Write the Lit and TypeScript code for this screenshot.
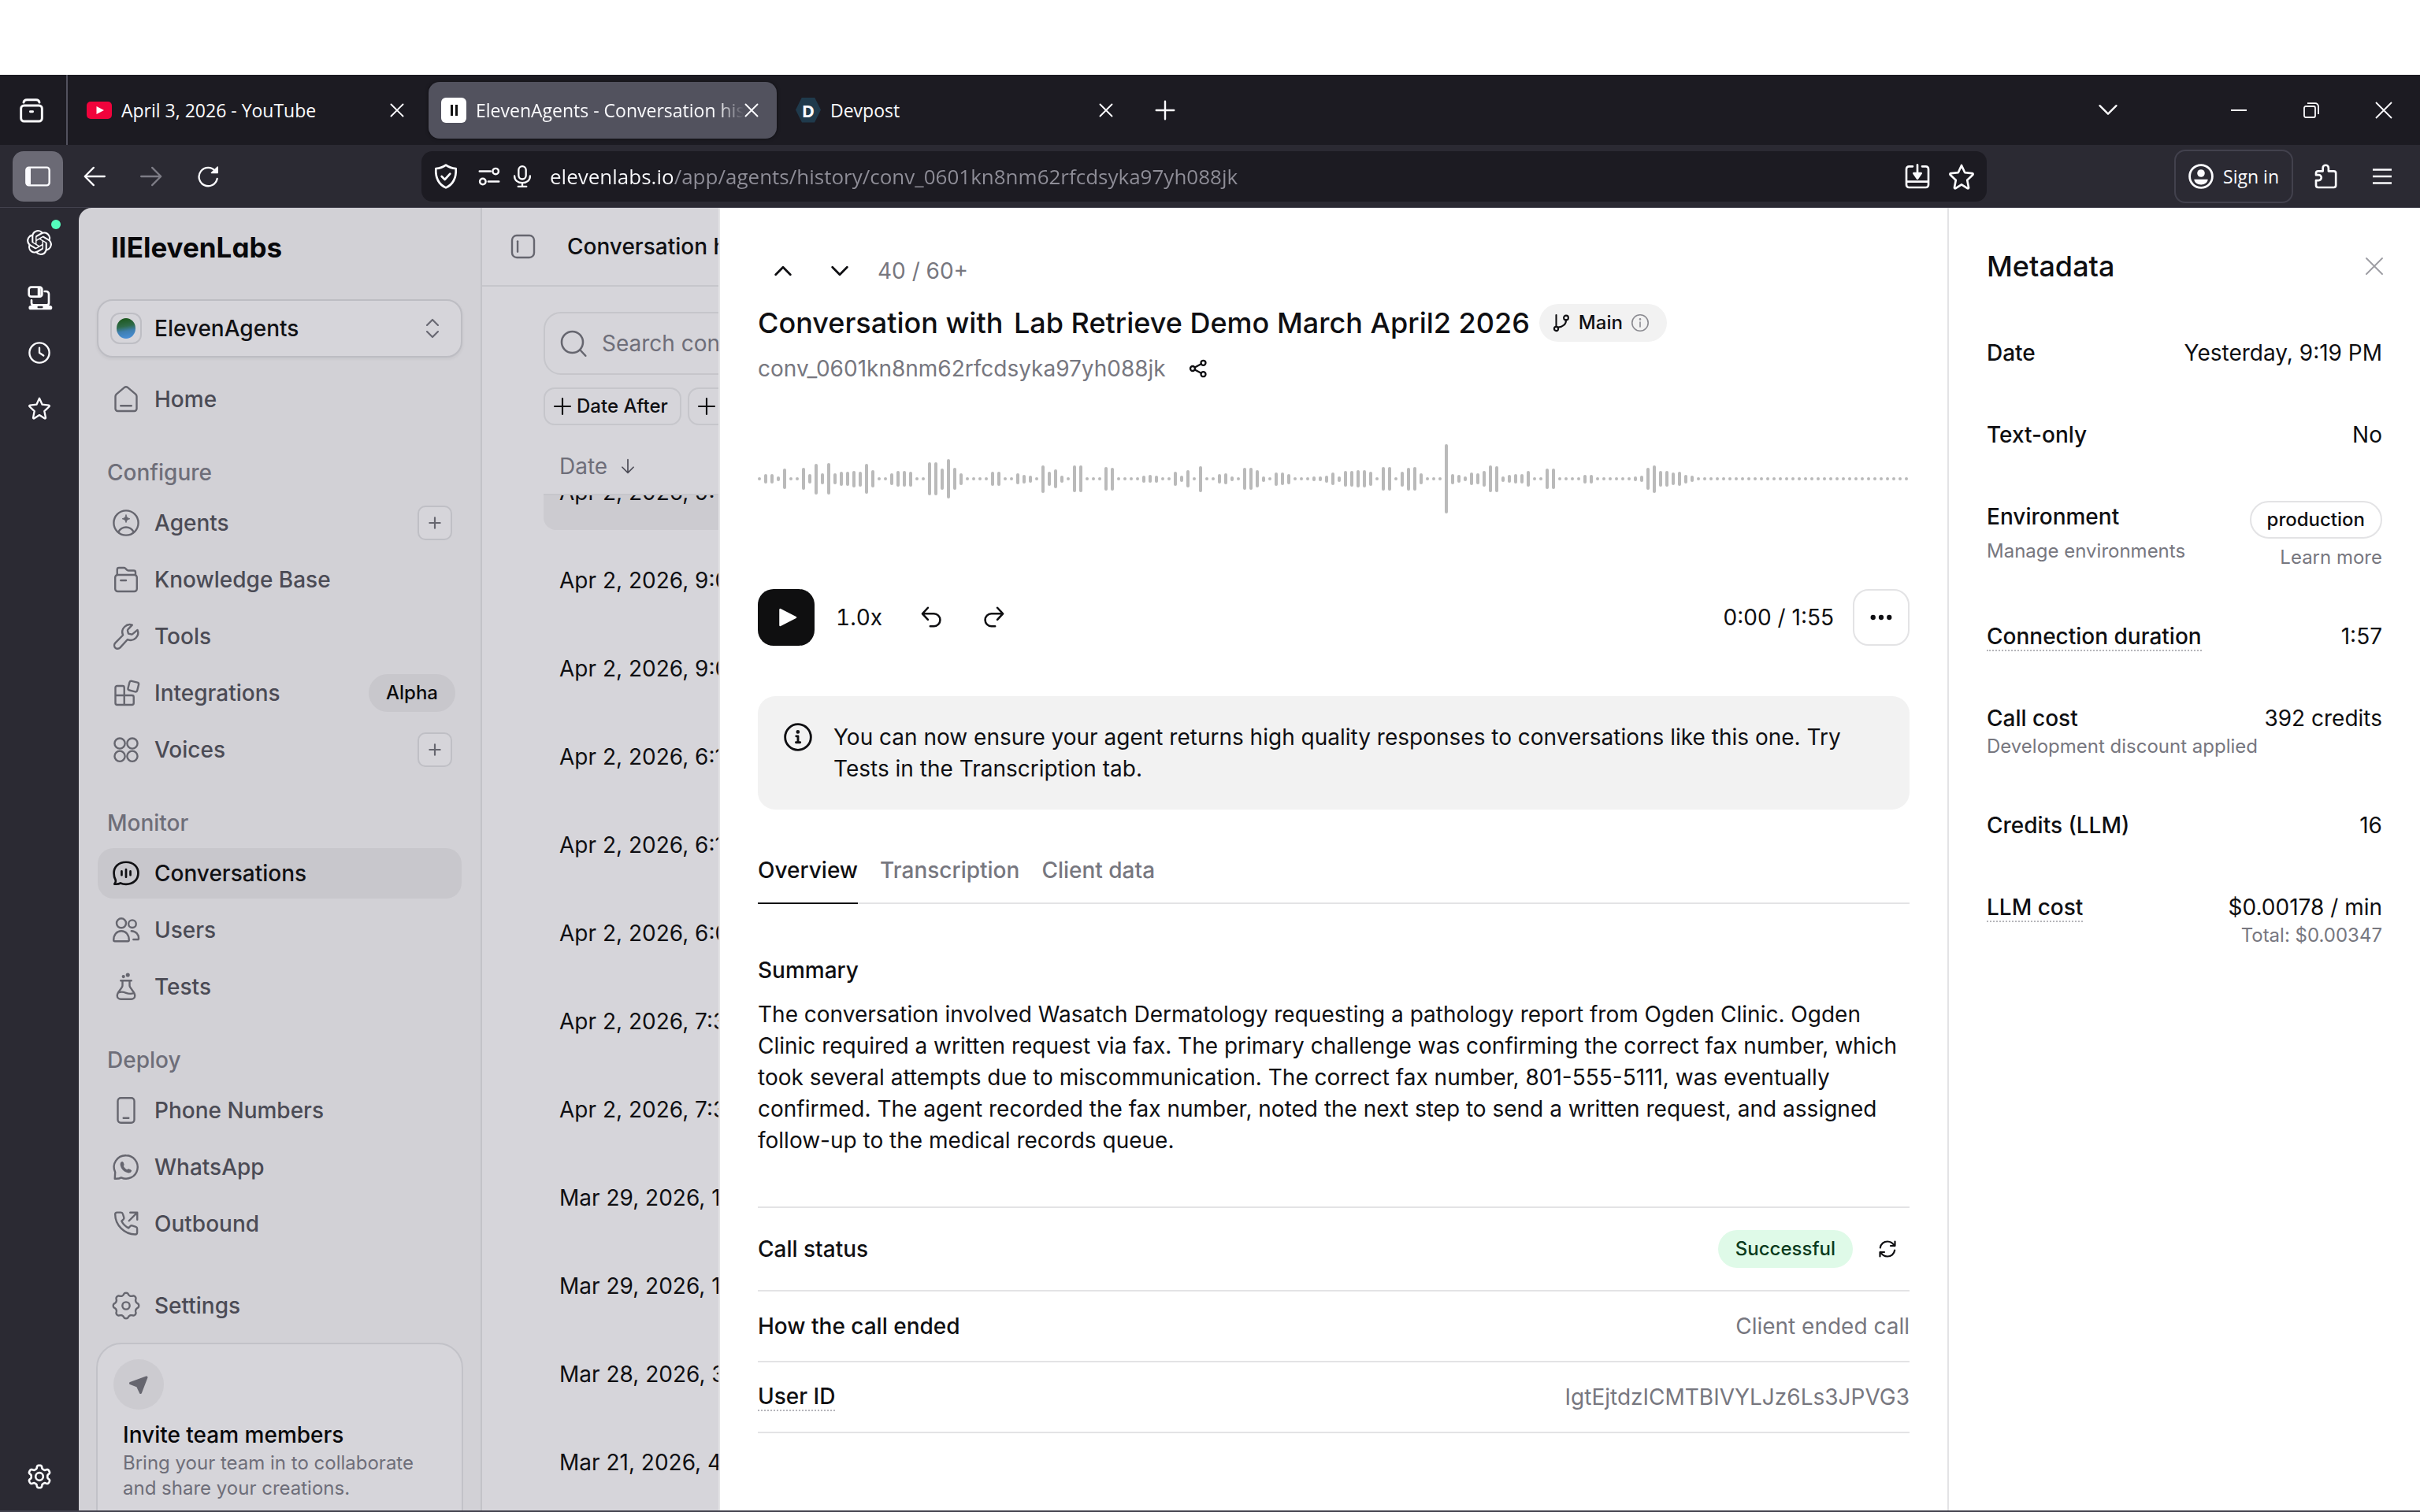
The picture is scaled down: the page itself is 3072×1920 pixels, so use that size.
import { LitElement, html, svg, css, nothing, type TemplateResult } from "lit";
import { customElement } from "lit/decorators.js";
import { classMap } from "lit/directives/class-map.js";
import { styleMap } from "lit/directives/style-map.js";

/* Closed outline of a cog: a circle whose radius swells once per tooth. */
const cog = (teeth: number, base: number, depth: number, sharp: number) => {
  const points: string[] = [];
  for (let i = 0; i < 144; i++) {
    const a = (i / 144) * Math.PI * 2;
    const r = base + depth * Math.tanh(sharp * Math.cos(teeth * a));
    points.push(`${(12 + r * Math.sin(a)).toFixed(2)} ${(12 - r * Math.cos(a)).toFixed(2)}`);
  }
  return `M${points.join("L")}Z`;
};

const stroke = (body: TemplateResult, width = 1.6) => html`<svg
  viewBox="0 0 24 24" fill="none" stroke="currentColor" stroke-width=${width}
  stroke-linecap="round" stroke-linejoin="round" aria-hidden="true">${body}</svg>`;

const icons: Record<string, TemplateResult> = {
  home: stroke(svg`<path d="M3 9.6c0-.7.3-1.3.8-1.8l6.7-5.7a2.300 2.300 0 0 1 3 0l6.700 5.700c.5.5.8 1.100.8 1.800v10.400a2 2 0 0 1-2 2H5a2 2 0 0 1-2-2z"/><path d="M7.500 17.500h9"/>`),
  agents: stroke(svg`<circle cx="12" cy="12" r="10.400"/><path d="M5.500 19.700c1.500-2.600 3.800-4 6.500-4s5 1.400 6.500 4"/><path d="M12 5.300c.5 2 1.200 2.700 3.200 3.200-2 .5-2.700 1.200-3.200 3.200-.5-2-1.200-2.700-3.200-3.200 2-.5 2.700-1.200 3.200-3.200z" fill="currentColor" stroke-width=".6"/>`),
  folder: stroke(svg`<rect x="2.800" y="8" width="18.400" height="14" rx="2.200"/><path d="M4.500 8V3.500A1.500 1.500 0 0 1 6 2h4.200c.5 0 1 .2 1.300.6l1.200 1.200c.3.300.7.500 1.100.500h4.700a1.500 1.500 0 0 1 1.500 1.500V8"/><path d="M7.500 12.700h4.500"/>`),
  wrench: stroke(svg`<path d="M21.700 6.600c.9 2.300.4 5-1.400 6.800-1.900 1.900-4.700 2.300-7 1.300l-6.300 6.900c-1.200 1.200-3 1.200-4.100.1s-1.100-2.900 0-4.100l6.500-6.600c-1-2.300-.6-5.100 1.300-7 1.800-1.800 4.300-2.300 6.500-1.600l-3.500 3.700c-.4.400-.5 1-.3 1.500l.6 2.100 2.200.6c.5.2 1.100 0 1.500-.4z"/>`),
  blocks: stroke(svg`<path d="M4.500 6h4.500a1.500 1.500 0 0 1 1.500 1.500V14h6.500a1.500 1.500 0 0 1 1.500 1.500v5a1.500 1.500 0 0 1-1.500 1.500H4.500A1.500 1.500 0 0 1 3 20.500v-13A1.500 1.500 0 0 1 4.500 6zM3 14h7.500v8"/><rect x="14.200" y="2.400" width="8" height="8" rx="1.500" transform="rotate(14 18.200 6.400)"/>`),
  circles: stroke(svg`<circle cx="6.700" cy="6.700" r="4.400"/><circle cx="17.300" cy="6.700" r="4.400"/><circle cx="6.700" cy="17.500" r="4.400"/><circle cx="17.300" cy="17.500" r="4.400"/>`),
  bubble: stroke(svg`<path d="M12 2.500c6.300 0 10.300 3.900 10.300 9.300s-4 9.400-10.300 9.400c-1.900 0-3.400-.3-4.700-.9-.9.600-3 1-5.100.8 1-1.200 1.300-2.200 1-3.300-1-1.700-1.500-3.700-1.500-6C1.700 6.400 5.700 2.500 12 2.500z"/><path d="M8.300 10.300v3.200M12 8.700v6.400M15.700 10.300v3.200"/>`, 1.8),
  users: stroke(svg`<circle cx="8" cy="6.200" r="4"/><path d="M1.500 20.500c0-4.500 2.500-7.700 6.500-7.700s6.500 3.200 6.500 7.700c0 .6-.4 1-1 1h-11c-.6 0-1-.4-1-1z"/><circle cx="17.300" cy="6.800" r="3.200"/><path d="M16.500 12.800c4 .2 6.200 3 6.200 6.300 0 .6-.4.900-1 .900h-3.500"/>`),
  flask: stroke(svg`<path d="M7.500 6.800h9M9 6.800v4c0 .8-.2 1.200-.6 1.800l-3.200 4.600c-.5.800-.7 1.500-.7 2.300 0 1.800 1.300 3 3 3h9c1.700 0 3-1.200 3-3 0-.8-.2-1.500-.7-2.300l-3.200-4.600c-.4-.6-.6-1-.6-1.800v-4M5.500 17c2.200-.9 4-.8 6.500.2s4.200 1 6.600.2"/><circle cx="9.800" cy="3.400" r=".6" fill="currentColor"/><circle cx="13.500" cy="2" r=".9" fill="currentColor"/>`),
  phone: stroke(svg`<rect x="5" y="1.500" width="14" height="21" rx="2.600"/><path d="M9.800 18.500h4.400"/>`),
  whatsapp: stroke(svg`<path d="M12 2.200a9.800 9.800 0 1 1-4.100 18.700c-1.200.7-3.300 1-5.400.9l.3-5.500A9.800 9.800 0 0 1 12 2.200z"/><path d="M8.800 7.800c.6.300 1 1.300 1.200 2.300l-.6.9c.5 1.600 1.900 3 3.600 3.700l1-.8c1 .2 1.800.6 2.300 1.200-.3 1.200-1.400 1.600-2.700 1.300-3-.6-5.500-3-6-5.900-.2-1.300.1-2.400 1.200-2.700z" fill="currentColor" stroke-width=".9"/>`),
  outbound: stroke(svg`<path d="M2.800 4c0-.9.700-1.600 1.600-1.600h3.300c.7 0 1.300.4 1.500 1.100l1 3.100c.2.600 0 1.200-.4 1.600L8.200 9.700c1.200 2.500 3.300 4.600 5.900 5.900l1.500-1.600c.4-.4 1-.600 1.600-.4l3.100 1c.7.200 1.100.800 1.100 1.500v3.300c0 .9-.7 1.600-1.600 1.600C10.700 21 2.800 13.100 2.800 4z"/><path d="M14.500 9.500l6.700-6.700M15.500 2.500h6v6"/>`),
  settings: stroke(svg`<path d=${cog(8, 9.9, 1.1, 1.2)}/><circle cx="12" cy="12" r="3.100"/>`),
  send: html`<svg viewBox="0 0 24 24" fill="currentColor" stroke="currentColor" stroke-width="3" stroke-linejoin="round" aria-hidden="true"><path d="M22 3 14.500 22.500 10.500 14 1.500 10.500z"/></svg>`,
  plus: stroke(svg`<path d="M12 4.500v15M4.500 12h15"/>`),
  plusBold: stroke(svg`<path d="M12 4v16M4 12h16"/>`, 2.6),
  updown: stroke(svg`<path d="M6 8.500l6-6 6 6M6 15.500l6 6 6-6"/>`, 1.9),
  up: stroke(svg`<path d="M5 15.500l7-7 7 7"/>`, 2.1),
  down: stroke(svg`<path d="M5 8.500l7 7 7-7"/>`, 2.1),
  chevron: stroke(svg`<path d="M3 7l9 9 9-9"/>`, 2),
  arrowDown: stroke(svg`<path d="M12 2v19.500M3.500 13.500l8.500 8.500 8.500-8.500"/>`, 2),
  panel: stroke(svg`<rect x="1.500" y="1.500" width="21" height="21" rx="4.500"/><path d="M6.800 7v10"/>`, 1.8),
  search: stroke(svg`<circle cx="11" cy="11" r="9"/><path d="M17.500 17.500l4.700 5"/>`, 1.7),
  branch: stroke(svg`<circle cx="5.500" cy="19.500" r="2.600"/><circle cx="18" cy="5.500" r="2.900"/><path d="M5.500 16.800V2M18 8.400c0 5-4 9-10 9.200"/>`, 2.1),
  info: stroke(svg`<circle cx="12" cy="12" r="10.200"/><path d="M12 11v6"/><circle cx="12" cy="7.400" r=".5" fill="currentColor"/>`),
  infoBold: stroke(svg`<circle cx="12" cy="12" r="10.900"/><path d="M10.500 11.200h1.500v5.300M10.300 16.500h3.500"/><circle cx="11.900" cy="7.600" r=".6" fill="currentColor"/>`, 1.9),
  share: stroke(svg`<circle cx="5" cy="12" r="3"/><circle cx="18.500" cy="4.800" r="3"/><circle cx="18.500" cy="19.200" r="3"/><path d="M7.700 10.600l8-4.300M7.700 13.400l8 4.300"/>`, 2.3),
  play: html`<svg viewBox="0 0 24 24" fill="currentColor" stroke="currentColor" stroke-width="2.500" stroke-linejoin="round" aria-hidden="true"><path d="M4.500 2v20L24 12z"/></svg>`,
  undo: stroke(svg`<path d="M8.500 1.500L2.500 8l6 6.500M3 8h12a6.800 6.800 0 0 1 0 13.600h-4"/>`, 2.2),
  redo: stroke(svg`<path d="M15.500 1.500l6 6.500-6 6.500M21 8H9a6.800 6.800 0 0 0 0 13.600h4"/>`, 2.2),
  dots: html`<svg viewBox="0 0 24 24" fill="currentColor" aria-hidden="true"><circle cx="3.200" cy="12" r="2.700"/><circle cx="12" cy="12" r="2.700"/><circle cx="20.800" cy="12" r="2.700"/></svg>`,
  refresh: stroke(svg`<path d="M2.800 10.500C3.500 5.700 7.300 2.500 12 2.500c3.800 0 7 2.200 8.700 5.500M21.500 2.500V8H16M21.200 13.500c-.7 4.800-4.500 8-9.200 8-3.800 0-7-2.200-8.700-5.500M2.500 21.500V16H8"/>`, 2.2),
  close: stroke(svg`<path d="M0 0l24 24M24 0L0 24"/>`, 2.3),
  closeBold: stroke(svg`<path d="M3 3l18 18M21 3L3 21"/>`, 2.3),
  tabs: stroke(svg`<path d="M4.500 4.500C4.800 2.800 5.800 2 7.500 2h9c1.700 0 2.700.8 3 2.500"/><rect x="2" y="7.500" width="20" height="15" rx="2.800"/><path d="M10.800 13.300h2.400"/>`, 2.2),
  youtube: html`<svg viewBox="0 0 32 22" aria-hidden="true"><rect width="32" height="22" rx="5" fill="#f0033c"/><path d="M12.500 6l9.500 5-9.500 5z" fill="#fff"/></svg>`,
  eleven: html`<svg viewBox="0 0 32 32" aria-hidden="true"><rect width="32" height="32" rx="6" fill="#fff"/><path d="M12 9h3v14h-3zM18 9h3v14h-3z" fill="#111"/></svg>`,
  sidebar: html`<svg viewBox="0 0 24 24" fill="none" stroke="currentColor" stroke-width="1.800" aria-hidden="true"><rect x="1" y="3.500" width="22" height="17" rx="2.500"/><path d="M3 4v16" stroke-width="4.500"/></svg>`,
  back: stroke(svg`<path d="M23 12H2M11 2.500L1.500 12l9.500 9.500"/>`, 2),
  forward: stroke(svg`<path d="M1 12h21M13 2.500l9.500 9.500-9.500 9.500"/>`, 2),
  reload: stroke(svg`<path d="M22 14.500A10 10 0 1 1 20 6.200"/><path d="M22.500 1.800v6.400h-6.700z" fill="currentColor" stroke-width="1.300"/>`, 2),
  shield: stroke(svg`<path d="M12 1.200c2.700 2 5.700 3 9.500 3.300C22 12.500 19 19.500 12 22.800 5 19.500 2 12.500 2.500 4.500 6.300 4.200 9.300 3.200 12 1.200z"/><path d="M8 12l3 3 5-5.500"/>`, 2),
  sliders: stroke(svg`<path d="M1.500 6.500h12M11 17.500h11.500"/><circle cx="19" cy="6.500" r="3.200"/><circle cx="5" cy="17.500" r="3.200"/>`, 2.1),
  mic: stroke(svg`<rect x="8" y="1" width="8" height="14" rx="4"/><path d="M3.500 11.500c0 4.500 3.500 7.500 8.500 7.500s8.500-3 8.500-7.500M12 19v4M7.500 23h9"/>`, 2),
  install: stroke(svg`<path d="M7.500 2.500H4A2.500 2.500 0 0 0 1.500 5v15A2.500 2.500 0 0 0 4 22.500h16a2.500 2.500 0 0 0 2.500-2.500V5A2.500 2.500 0 0 0 20 2.500h-3.500M1.500 17h21M12 1v8"/><path d="M8.500 9h7L12 14z" fill="currentColor"/>`, 2),
  star: stroke(svg`<path d="M12 1.500l3.100 6.800 7.200.8c.7.100.9.900.4 1.400l-5.300 5 1.400 7.100c.1.700-.6 1.200-1.200.8L12 19.800l-5.600 3.600c-.6.400-1.300-.1-1.200-.8l1.400-7.100-5.300-5c-.5-.5-.3-1.300.4-1.400l7.200-.8z"/>`, 2),
  account: html`<svg viewBox="0 0 24 24" fill="none" stroke="currentColor" stroke-width="2.100" aria-hidden="true"><circle cx="12" cy="12" r="10.800"/><circle cx="12" cy="9" r="3.600" fill="currentColor" stroke="none"/><path d="M5.500 14.800h13c0 2.800-2.800 5-6.500 5s-6.500-2.200-6.500-5z" fill="currentColor" stroke="none"/></svg>`,
  puzzle: stroke(svg`<path d="M9.500 7V4a2.700 2.700 0 0 1 5.400 0v3h5a2 2 0 0 1 2 2v11.500a2 2 0 0 1-2 2H5a2 2 0 0 1-2-2v-4.700h2.500a2.600 2.600 0 0 0 0-5.200H3V9a2 2 0 0 1 2-2z"/>`, 2),
  menu: html`<svg viewBox="0 0 24 24" fill="none" stroke="currentColor" stroke-width="2.400" aria-hidden="true"><path d="M0 3.500h24M0 12h24M0 20.500h24"/></svg>`,
  minimise: html`<svg viewBox="0 0 20 20" fill="none" stroke="currentColor" stroke-width="2" aria-hidden="true"><path d="M0 10h20"/></svg>`,
  restore: html`<svg viewBox="0 0 20 20" fill="none" stroke="currentColor" stroke-width="1.800" aria-hidden="true"><rect x="1" y="5" width="14" height="14" rx="2"/><path d="M5 1.200h10a4 4 0 0 1 4 4V15"/></svg>`,
  windowClose: html`<svg viewBox="0 0 20 20" fill="none" stroke="currentColor" stroke-width="1.800" aria-hidden="true"><path d="M0 0l20 20M20 0L0 20"/></svg>`,
  openai: html`<svg viewBox="0 0 24 24" fill="currentColor" aria-hidden="true"><path d="M22.2819 9.8211a5.9847 5.9847 0 0 0-.5157-4.9108 6.0462 6.0462 0 0 0-6.5098-2.9A6.0651 6.0651 0 0 0 4.9807 4.1818a5.9847 5.9847 0 0 0-3.9977 2.9 6.0462 6.0462 0 0 0 .7427 7.0966 5.98 5.98 0 0 0 .511 4.9107 6.051 6.051 0 0 0 6.5146 2.9001A5.9847 5.9847 0 0 0 13.2599 24a6.0557 6.0557 0 0 0 5.7718-4.2058 5.9894 5.9894 0 0 0 3.9977-2.9001 6.0557 6.0557 0 0 0-.7475-7.0729zm-9.022 12.6081a4.4755 4.4755 0 0 1-2.8764-1.0408l.1419-.0804 4.7783-2.7582a.7948.7948 0 0 0 .3927-.6813v-6.7369l2.02 1.1686a.071.071 0 0 1 .038.052v5.5826a4.504 4.504 0 0 1-4.4945 4.4944zm-9.6607-4.1254a4.4708 4.4708 0 0 1-.5346-3.0137l.142.0852 4.783 2.7582a.7712.7712 0 0 0 .7806 0l5.8428-3.3685v2.3324a.0804.0804 0 0 1-.0332.0615L9.74 19.9502a4.4992 4.4992 0 0 1-6.1408-1.6464zM2.3408 7.8956a4.485 4.485 0 0 1 2.3655-1.9728V11.6a.7664.7664 0 0 0 .3879.6765l5.8144 3.3543-2.0201 1.1685a.0757.0757 0 0 1-.071 0l-4.8303-2.7865A4.504 4.504 0 0 1 2.3408 7.872zm16.5963 3.8558L13.1038 8.364 15.1192 7.2a.0757.0757 0 0 1 .071 0l4.8303 2.7913a4.4944 4.4944 0 0 1-.6765 8.1042v-5.6772a.79.79 0 0 0-.407-.667zm2.0107-3.0231l-.142-.0852-4.7735-2.7818a.7759.7759 0 0 0-.7854 0L9.409 9.2297V6.8974a.0662.0662 0 0 1 .0284-.0615l4.8303-2.7866a4.4992 4.4992 0 0 1 6.6802 4.66zM8.3065 12.863l-2.02-1.1638a.0804.0804 0 0 1-.038-.0567V6.0742a4.4992 4.4992 0 0 1 7.3757-3.4537l-.142.0805L8.704 5.459a.7948.7948 0 0 0-.3927.6813zm1.0976-2.3654l2.602-1.4998 2.6069 1.4998v2.9994l-2.5974 1.4997-2.6067-1.4997Z"/></svg>`,
  devices: stroke(svg`<rect x="2" y="2" width="12.500" height="9" rx="2.200"/><path d="M11.800 3v7" stroke-width="3"/><path d="M17 6h1.500A2.500 2.500 0 0 1 21 8.500V17a2 2 0 0 1-2 2H6.500a2 2 0 0 1-2-2v-2.500" /><path d="M3.800 21.500h18.400" stroke-width="4"/><path d="M11 21h3.500" stroke="#2b2a33" stroke-width="1.800"/>`, 2),
  clock: stroke(svg`<circle cx="12" cy="12" r="10.800"/><path d="M12 6.500V12l4.500 3"/>`, 2),
  gear: stroke(svg`<path d=${cog(6, 9.2, 1.5, 2.2)}/><circle cx="12" cy="12" r="3.600"/>`, 2),
};

const icon = (name: string, size: number) =>
  html`<span class="icon s${size}">${icons[name]}</span>`;

const iconStyles = css`
  .icon { display: inline-flex; flex: none; }
  .icon svg { display: block; width: 100%; height: 100%; overflow: visible; }
  .s20 { width: 20px; height: 20px; }
  .s24 { width: 24px; height: 24px; }
  .s28 { width: 28px; height: 28px; }
  .s32 { width: 32px; height: 32px; }
  .s36 { width: 36px; height: 36px; }
`;

const resetStyles = css`
  :host, * { box-sizing: border-box; }
  button, input, select { font: inherit; color: inherit; margin: 0; border: 0; padding: 0; background: none; outline: none; }
  button { display: inline-flex; align-items: center; justify-content: center; cursor: pointer; }
  h1, h2, h3, p, ul, dl, dt, dd { margin: 0; padding: 0; font-size: inherit; font-weight: inherit; }
  ul { list-style: none; }
  a { color: inherit; text-decoration: none; }
`;

@customElement("browser-chrome")
class BrowserChrome extends LitElement {
  static styles = [resetStyles, iconStyles, css`
    :host { display: block; color: #fbfbfe; font: 400 23px/32px "Open Sans", "Noto Sans", sans-serif; }
    .tabs { display: flex; align-items: center; height: 89px; padding-right: 36px; background: #1c1b22; }
    .overview { width: 86px; height: 100%; padding-right: 4px; border-right: 2px solid #52525e; }
    .tab { display: flex; align-items: center; gap: 12px; width: 442px; height: 72px; padding: 0 22px 0 16px; border-radius: 14px; }
    .tab.first { margin: 0 8px; }
    .tab.active { background: #52525e; box-shadow: 0 0 4px rgba(0, 0, 0, .5); }
    .tab + .tab { margin-left: 8px; }
    .tab.first + .tab { margin-left: 0; }
    .title { flex: 1; min-width: 0; overflow: hidden; white-space: nowrap; }
    .active .title { margin-right: -12px; -webkit-mask-image: linear-gradient(90deg, #000 90%, transparent); mask-image: linear-gradient(90deg, #000 90%, transparent); }
    .favicon { display: grid; place-items: center; flex: none; width: 32px; height: 32px; }
    .favicon svg { width: 32px; display: block; }
    .hexagon { background: #1f3a4c; clip-path: polygon(25% 0, 75% 0, 100% 50%, 75% 100%, 25% 100%, 0 50%); font-size: 22px; font-weight: 700; line-height: 30px; }
    .new { width: 72px; height: 72px; margin-left: 7px; }
    .window { display: flex; align-items: center; gap: 72px; margin-left: auto; }
    .window .list { margin-right: 70px; }
    .bar { display: flex; align-items: center; height: 80px; padding: 0 36px 0 16px; background: #2b2a33; border-bottom: 1px solid #42414d; }
    .square { width: 64px; height: 64px; border-radius: 14px; }
    .pressed { background: #6b6a75; }
    .nav { display: flex; gap: 8px; margin-left: 8px; }
    .muted { color: #7d7c86; }
    .url { display: flex; align-items: center; flex: 1; height: 64px; margin: 0 238px 0 239px; padding: 0 16px 0 15px; border-radius: 14px; background: #1c1b22; }
    .url .site { margin: 0 14px 0 25px; }
    .url .site + button { margin-right: 21px; }
    .url .save { margin-right: 24px; }
    .address { flex: 1; min-width: 0; height: 40px; font-size: 26px; background: linear-gradient(90deg, #fbfbfe 156px, #8f8e98 156px); -webkit-background-clip: text; background-clip: text; -webkit-text-fill-color: transparent; }
    .signin { gap: 12px; height: 68px; padding: 0 16px; border: 2px solid #42414d; border-radius: 14px; }
    .end { display: flex; align-items: center; gap: 25px; }
    .end .menu { margin-left: 19px; }
  `];

  private tab(favicon: unknown, title: string, kind = "") {
    return html`<div class="tab ${kind}">${favicon}<span class="title">${title}</span>
      <button aria-label="Close ${title}">${icon("closeBold", 20)}</button></div>`;
  }

  render() {
    return html`
      <div class="tabs">
        <button class="overview" aria-label="Tab overview">${icon("tabs", 32)}</button>
        ${this.tab(html`<span class="favicon">${icons.youtube}</span>`, "April 3, 2026 - YouTube", "first")}
        ${this.tab(html`<span class="favicon">${icons.eleven}</span>`, "ElevenAgents - Conversation history", "active")}
        ${this.tab(html`<span class="favicon hexagon">D</span>`, "Devpost")}
        <button class="new" aria-label="New tab">${icon("plus", 36)}</button>
        <div class="window">
          <button class="list" aria-label="List tabs">${icon("chevron", 28)}</button>
          <button aria-label="Minimise">${icon("minimise", 20)}</button>
          <button aria-label="Restore">${icon("restore", 20)}</button>
          <button aria-label="Close window">${icon("windowClose", 20)}</button>
        </div>
      </div>
      <div class="bar">
        <button class="square pressed" aria-label="Sidebar">${icon("sidebar", 32)}</button>
        <div class="nav">
          <button class="square" aria-label="Back">${icon("back", 28)}</button>
          <button class="square muted" aria-label="Forward">${icon("forward", 28)}</button>
          <button class="square" aria-label="Reload">${icon("reload", 28)}</button>
        </div>
        <div class="url">
          <button aria-label="Protection">${icon("shield", 32)}</button>
          <button class="site" aria-label="Site settings">${icon("sliders", 28)}</button>
          <button aria-label="Microphone">${icon("mic", 28)}</button>
          <input class="address" aria-label="Address" .value=${"elevenlabs.io/app/agents/history/conv_0601kn8nm62rfcdsyka97yh088jk"}>
          <button class="save" aria-label="Install">${icon("install", 32)}</button>
          <button aria-label="Bookmark">${icon("star", 32)}</button>
        </div>
        <div class="end">
          <button class="signin">${icon("account", 32)}Sign in</button>
          <button aria-label="Extensions">${icon("puzzle", 32)}</button>
          <button class="menu" aria-label="Menu">${icon("menu", 24)}</button>
        </div>
      </div>`;
  }
}

@customElement("tool-rail")
class ToolRail extends LitElement {
  static styles = [resetStyles, iconStyles, css`
    :host { display: flex; flex-direction: column; align-items: center; flex: none; width: 100px; padding: 9px 0 8px; background: #2b2a33; color: #fbfbfe; }
    button { position: relative; width: 68px; height: 70px; }
    .gear { margin-top: auto; }
    .dot { position: absolute; top: 6px; right: 7px; width: 12px; height: 12px; border-radius: 50%; background: #54ffbd; }
  `];

  render() {
    return html`
      <button aria-label="Chatbot">${icon("openai", 32)}<span class="dot"></span></button>
      <button aria-label="Synced tabs">${icon("devices", 32)}</button>
      <button aria-label="History">${icon("clock", 28)}</button>
      <button aria-label="Bookmarks">${icon("star", 28)}</button>
      <button class="gear" aria-label="Customise sidebar">${icon("gear", 32)}</button>`;
  }
}

interface Link { icon: string; label: string; add?: boolean; tag?: string; current?: boolean; }

const groups: { title?: string; links: Link[] }[] = [
  { links: [{ icon: "home", label: "Home" }] },
  { title: "Configure", links: [
    { icon: "agents", label: "Agents", add: true },
    { icon: "folder", label: "Knowledge Base" },
    { icon: "wrench", label: "Tools" },
    { icon: "blocks", label: "Integrations", tag: "Alpha" },
    { icon: "circles", label: "Voices", add: true },
  ] },
  { title: "Monitor", links: [
    { icon: "bubble", label: "Conversations", current: true },
    { icon: "users", label: "Users" },
    { icon: "flask", label: "Tests" },
  ] },
  { title: "Deploy", links: [
    { icon: "phone", label: "Phone Numbers" },
    { icon: "whatsapp", label: "WhatsApp" },
    { icon: "outbound", label: "Outbound" },
  ] },
];

@customElement("app-sidebar")
class AppSidebar extends LitElement {
  static styles = [resetStyles, iconStyles, css`
    :host { display: block; flex: none; width: 512px; padding: 0 24px; overflow: hidden; background: #d2d1d6; border-right: 2px solid #c3c3c8; border-top-left-radius: 16px; color: #4b4b55; font-weight: 500; }
    .logo { display: block; padding: 28px 17px 48px; font-size: 35px; line-height: 44px; font-weight: 700; font-feature-settings: "cv11"; color: #08080a; }
    .picker { display: flex; align-items: center; height: 74px; margin: -4px -1px 21px; padding: 0 22px 0 15px; border: 2px solid #bdbdc3; border-radius: 20px; background: #d6d5da; box-shadow: 0 2px 4px rgba(0, 0, 0, .06); color: #111114; }
    .orb { display: grid; place-items: center; width: 40px; height: 40px; border: 2px solid #bebec4; border-radius: 12px; }
    .orb::after { content: ""; width: 24px; height: 26px; border-radius: 50%; background: linear-gradient(170deg, #1f5a22 10%, #2f6b4a 40%, #3f7fb0 62%, #4a90d9 95%); }
    .picker select { flex: 1; height: 100%; padding-left: 16px; appearance: none; font-weight: 500; }
    .picker .icon { color: #6a6a74; }
    .group { display: block; margin: 41px 0 12px; padding-left: 12px; line-height: 40px; color: #6e6e79; font-weight: 500; }
    .links { display: grid; gap: 8px; }
    .row { display: flex; align-items: center; height: 64px; padding-right: 12px; border-radius: 20px; }
    .row.current { background: #c8c7cc; color: #111114; }
    .row a { display: flex; align-items: center; gap: 18px; flex: 1; padding-left: 18px; }
    .row .icon { color: #66666f; }
    .row.current .icon { color: #111114; }
    .add { width: 44px; height: 44px; border: 2px solid #bfbfc5; border-radius: 10px; background: #d6d5da; }
    .tag { margin-right: -4px; padding: 0 22px; border-radius: 24px; background: #c8c7cc; font-size: 24px; line-height: 48px; color: #0b0b0d; }
    .settings { margin: 40px 0 15px; }
    .invite { padding: 19px 20px 40px; margin: 0 -2px; border: 2px solid #c2c2c8; border-radius: 32px; background: #d6d5da; }
    .disc { display: grid; place-items: center; width: 64px; height: 64px; border-radius: 50%; background: #cccbd0; color: #66666f; }
    .invite h2 { margin: 14px 12px 2px; line-height: 36px; font-weight: 500; color: #08080a; }
    .invite p { margin: 0 12px; font-size: 24px; line-height: 32px; font-weight: 400; color: #6e6e79; }
  `];

  private row(link: Link) {
    return html`<li class=${classMap({ row: true, current: !!link.current })}>
      <a href="#">${icon(link.icon, 36)}<span>${link.label}</span></a>
      ${link.add ? html`<button class="add" aria-label="Add ${link.label}">${icon("plusBold", 20)}</button>` : nothing}
      ${link.tag ? html`<span class="tag">${link.tag}</span>` : nothing}
    </li>`;
  }

  render() {
    return html`
      <a class="logo" href="#">IIElevenLabs</a>
      <div class="picker"><span class="orb"></span>
        <select aria-label="Product"><option>ElevenAgents</option></select>${icon("updown", 28)}</div>
      <nav>${groups.map((g) => html`
        ${g.title ? html`<h2 class="group">${g.title}</h2>` : nothing}
        <ul class="links">${g.links.map((l) => this.row(l))}</ul>`)}
        <ul class="links settings">${this.row({ icon: "settings", label: "Settings" })}</ul>
      </nav>
      <section class="invite">
        <span class="disc">${icon("send", 24)}</span>
        <h2>Invite team members</h2>
        <p>Bring your team in to collaborate and share your creations.</p>
      </section>`;
  }
}

const dates = [
  "Apr 2, 2026, 9:19 PM", "Apr 2, 2026, 9:08 PM", "Apr 2, 2026, 9:06 PM", "Apr 2, 2026, 6:17 PM",
  "Apr 2, 2026, 6:12 PM", "Apr 2, 2026, 6:05 PM", "Apr 2, 2026, 7:38 AM", "Apr 2, 2026, 7:35 AM",
  "Mar 29, 2026, 1:20 PM", "Mar 29, 2026, 1:14 PM", "Mar 28, 2026, 3:41 PM", "Mar 21, 2026, 4:02 PM",
];

@customElement("conversation-list")
class ConversationList extends LitElement {
  static styles = [resetStyles, iconStyles, css`
    :host { display: grid; grid-template: minmax(0, 1fr) / minmax(720px, 1fr); flex: none; width: 300px; overflow: hidden; background: #d6d5da; color: #0f0f12; }
    main { display: flex; flex-direction: column; min-height: 0; }
    .top { display: flex; align-items: center; flex: none; gap: 40px; height: 100px; padding: 0 36px; border-bottom: 2px solid #c6c6cb; font-weight: 500; }
    .top .icon { color: #66666f; }
    .content { display: flex; flex-direction: column; flex: 1; min-height: 0; padding: 32px 78px 0; }
    .search { display: flex; align-items: center; gap: 18px; flex: none; height: 80px; padding: 0 18px; border: 2px solid #c6c6cb; border-radius: 22px; color: #66666f; }
    .search input { flex: 1; height: 100%; }
    .search input::placeholder { color: #6e6e79; opacity: 1; }
    .filters { display: flex; flex: none; gap: 8px; margin: 16px 0; }
    .filters button { gap: 2px; height: 48px; padding: 0 15px 0 6px; border: 2px solid #c6c6cb; border-radius: 14px; font-size: 24px; font-weight: 500; }
    .scroll { flex: 1; min-height: 0; overflow: hidden; padding-bottom: 100px; }
    table { width: 100%; border-spacing: 0 16px; }
    th { position: sticky; top: 0; height: 73px; padding: 0 20px; border-bottom: 2px solid #c6c6cb; background: #d6d5da; text-align: left; font-weight: 400; color: #6e6e79; }
    th button { gap: 16px; }
    th .icon { color: #4b4b55; }
    td { height: 96px; padding: 0 20px; }
    .selected td { background: #cccbd0; border-radius: 16px; }
  `];

  firstUpdated() {
    this.renderRoot.querySelector(".scroll")!.scrollTop = 84;
  }

  render() {
    return html`<main>
      <header class="top">${icon("panel", 32)}<h1>Conversation history</h1></header>
      <div class="content">
        <label class="search">${icon("search", 36)}<input type="search" placeholder="Search conversations..." aria-label="Search conversations"></label>
        <div class="filters"><button>${icon("plus", 32)}Date After</button><button>${icon("plus", 32)}Date Before</button></div>
        <div class="scroll">
          <table>
            <thead><tr><th scope="col"><button>Date ${icon("arrowDown", 20)}</button></th></tr></thead>
            <tbody>${dates.map((d, i) => html`<tr class=${classMap({ selected: i === 0 })}><td>${d}</td></tr>`)}</tbody>
          </table>
        </div>
      </div>
    </main>`;
  }
}

const flat = (n: number) => Array<number>(n).fill(4);
const levels = [
  4, 12, 12, 6, 26, 4, 4, 28, 12, 39, 14, 40, 14, 18, 18, 21, 19, 38, 22, 4, 4, 15, 20, 20, 19, 4, 4, 42, 42, 27,
  50, 28, 15, 4, 4, 4, 4, 18, 18, 4, 4, 14, 11, 9, 4, 35, 18, 24, 9, 4, 34, 34, 4, 4, 4, 30, 29, 4, 4, 4,
  4, 9, 10, 9, 4, 4, 18, 8, 22, 4, 33, 4, 4, 12, 14, 6, 4, 28, 28, 22, 7, 4, 17, 16, 13, 4, 4, 4, 6, 6,
  9, 16, 7, 20, 20, 22, 22, 18, 4, 30, 30, 4, 19, 29, 30, 14, 4, 4, 4, 88, 13, 10, 6, 16, 14, 20, 34, 33, 7, 10,
  12, 12, 20, 4, 4, 26, 26, ...flat(4), 11, 11, ...flat(6), 6, 8, 28, 35, 20, 20, 16, 18, 11, 8, ...flat(34),
];

@customElement("conversation-detail")
class ConversationDetail extends LitElement {
  static styles = [resetStyles, iconStyles, css`
    :host { display: block; flex: 1; min-width: 0; padding: 48px 48px 0; overflow: hidden; }
    .flex { display: flex; align-items: center; }
    .pager { height: 64px; gap: 8px; }
    .pager button { width: 64px; height: 64px; }
    .pager .grey { margin-left: 8px; }
    .grey { color: #77777f; }
    .heading { gap: 12px; margin: 10px 0 14px; }
    h1 { font-size: 36px; line-height: 48px; font-weight: 500; }
    h1 span { margin-left: 4px; }
    .chip { display: flex; align-items: center; gap: 10px; height: 48px; padding: 0 22px 0 16px; border-radius: 24px; background: #f2f2f2; font-size: 24px; font-weight: 500; }
    .chip .icon:last-child { color: #8a8a90; }
    .id { gap: 29px; line-height: 40px; }
    .share { color: #0f0f12; }
    .wave { display: flex; align-items: center; justify-content: space-between; height: 88px; margin: 76px 0 96px; }
    .wave span { width: 4px; border-radius: 2px; background: #bababa; }
    .player { gap: 52px; }
    .play { width: 72px; height: 72px; border-radius: 20px; background: #0f0f10; color: #fff; }
    .speed { margin: 0 -4px 0 -25px; font-variant-numeric: tabular-nums; }
    .time { margin-left: auto; margin-right: -28px; }
    .more { width: 72px; height: 72px; border: 2px solid #e3e3e5; border-radius: 20px; }
    .notice { display: flex; gap: 27px; margin-top: 64px; padding: 32px 33px; border-radius: 22px; background: #f2f2f2; }
    .notice .icon { margin-top: 2px; }
    .tabs { display: flex; gap: 28px; margin-top: 57px; border-bottom: 2px solid #e3e3e5; }
    .tabs button { margin-bottom: -2px; padding-bottom: 21px; border-bottom: 2px solid transparent; font-weight: 500; line-height: 40px; color: #77777f; }
    .tabs .active { border-color: #0f0f12; color: #0f0f12; }
    h2 { margin: 64px 0 16px; font-weight: 500; line-height: 40px; }
    .facts { margin-top: 64px; border-top: 2px solid #e3e3e5; }
    .facts div { display: flex; align-items: center; justify-content: space-between; height: 90px; border-bottom: 2px solid #e3e3e5; }
    .facts .status { height: 106px; }
    dt { font-weight: 500; }
    .dotted { border-bottom: 2px dotted #b5b5ba; line-height: 34px; }
    .ok { padding: 0 22px; border-radius: 24px; background: #dffae8; color: #0a3a1c; font-size: 24px; font-weight: 500; line-height: 48px; }
    .status dd { display: flex; align-items: center; gap: 32px; padding-right: 16px; }
  `];

  render() {
    return html`
      <div class="flex pager">
        <button aria-label="Previous">${icon("up", 32)}</button>
        <button aria-label="Next">${icon("down", 32)}</button>
        <span class="grey">40 / 60+</span>
      </div>
      <div class="flex heading">
        <h1>Conversation with <span>Lab Retrieve Demo March April2 2026</span></h1>
        <span class="chip">${icon("branch", 24)}Main${icon("info", 24)}</span>
      </div>
      <div class="flex id grey">conv_0601kn8nm62rfcdsyka97yh088jk<button aria-label="Share" class="share">${icon("share", 24)}</button></div>
      <div class="wave" role="img" aria-label="Waveform">${levels.map((h) => html`<span style=${styleMap({ height: `${h}px` })}></span>`)}</div>
      <div class="flex player">
        <button class="play" aria-label="Play">${icon("play", 24)}</button>
        <button class="speed">1.0x</button>
        <button aria-label="Back">${icon("undo", 28)}</button>
        <button aria-label="Forward">${icon("redo", 28)}</button>
        <span class="time">0:00 / 1:55</span>
        <button class="more" aria-label="More">${icon("dots", 28)}</button>
      </div>
      <div class="notice">${icon("infoBold", 36)}<p>You can now ensure your agent returns high quality responses to conversations like this one. Try Tests in the Transcription tab.</p></div>
      <div class="tabs" role="tablist">
        <button class="active" role="tab" aria-selected="true">Overview</button>
        <button role="tab">Transcription</button>
        <button role="tab">Client data</button>
      </div>
      <h2>Summary</h2>
      <p>The conversation involved Wasatch Dermatology requesting a pathology report from Ogden Clinic. Ogden Clinic required a written request via fax. The primary challenge was confirming the correct fax number, which took several attempts due to miscommunication. The correct fax number, 801-555-5111, was eventually confirmed. The agent recorded the fax number, noted the next step to send a written request, and assigned follow-up to the medical records queue.</p>
      <dl class="facts">
        <div class="status"><dt>Call status</dt><dd><span class="ok">Successful</span><button aria-label="Refresh">${icon("refresh", 24)}</button></dd></div>
        <div><dt>How the call ended</dt><dd class="grey">Client ended call</dd></div>
        <div><dt class="dotted">User ID</dt><dd class="grey">IgtEjtdzICMTBIVYLJz6Ls3JPVG3</dd></div>
      </dl>`;
  }
}

@customElement("conversation-metadata")
class ConversationMetadata extends LitElement {
  static styles = [resetStyles, iconStyles, css`
    :host { display: block; flex: none; width: 600px; padding: 50px 48px 0; border-left: 2px solid #e3e3e5; }
    header { display: flex; align-items: center; justify-content: space-between; margin-bottom: 66px; }
    h2 { font-size: 36px; line-height: 48px; font-weight: 500; }
    header button { color: #9d9da3; }
    dl { display: grid; gap: 64px; }
    dl > div { display: flex; justify-content: space-between; }
    dt { font-weight: 500; }
    dd { text-align: right; }
    small { display: block; font-size: 24px; font-weight: 400; line-height: 32px; color: #77777f; }
    .pill { display: block; padding: 0 20px; border: 2px solid #e3e3e5; border-radius: 24px; font-size: 24px; font-weight: 500; line-height: 44px; }
    .spaced { margin-top: 8px; }
    .dotted { display: inline-block; border-bottom: 2px dotted #b5b5ba; line-height: 34px; }
  `];

  render() {
    return html`
      <header><h2>Metadata</h2><button aria-label="Close">${icon("close", 20)}</button></header>
      <dl>
        <div><dt>Date</dt><dd>Yesterday, 9:19 PM</dd></div>
        <div><dt>Text-only</dt><dd>No</dd></div>
        <div><dt>Environment<small class="spaced"><a href="#">Manage environments</a></small></dt>
          <dd><span class="pill">production</span><small class="spaced"><a href="#">Learn more</a></small></dd></div>
        <div><dt><span class="dotted">Connection duration</span></dt><dd>1:57</dd></div>
        <div><dt>Call cost<small>Development discount applied</small></dt><dd>392 credits</dd></div>
        <div><dt>Credits (LLM)</dt><dd>16</dd></div>
        <div><dt><span class="dotted">LLM cost</span></dt><dd>$0.00178 / min<small>Total: $0.00347</small></dd></div>
      </dl>`;
  }
}

@customElement("app-root")
class AppRoot extends LitElement {
  static styles = css`
    :host { display: flex; flex-direction: column; height: 100vh; box-sizing: border-box; padding-top: 95px; overflow: hidden; background: #fff; color: #0f0f12; font: 400 28px/40px Inter, sans-serif; border-bottom: 2px solid #42414d; }
    .body { display: flex; flex: 1; min-height: 0; background: #2b2a33; }
    .drawer { display: flex; flex: 1; min-width: 0; background: #fff; border-left: 2px solid #e3e3e5; }
  `;

  render() {
    return html`
      <browser-chrome></browser-chrome>
      <div class="body">
        <tool-rail></tool-rail>
        <app-sidebar></app-sidebar>
        <conversation-list></conversation-list>
        <aside class="drawer">
          <conversation-detail></conversation-detail>
          <conversation-metadata></conversation-metadata>
        </aside>
      </div>`;
  }
}
